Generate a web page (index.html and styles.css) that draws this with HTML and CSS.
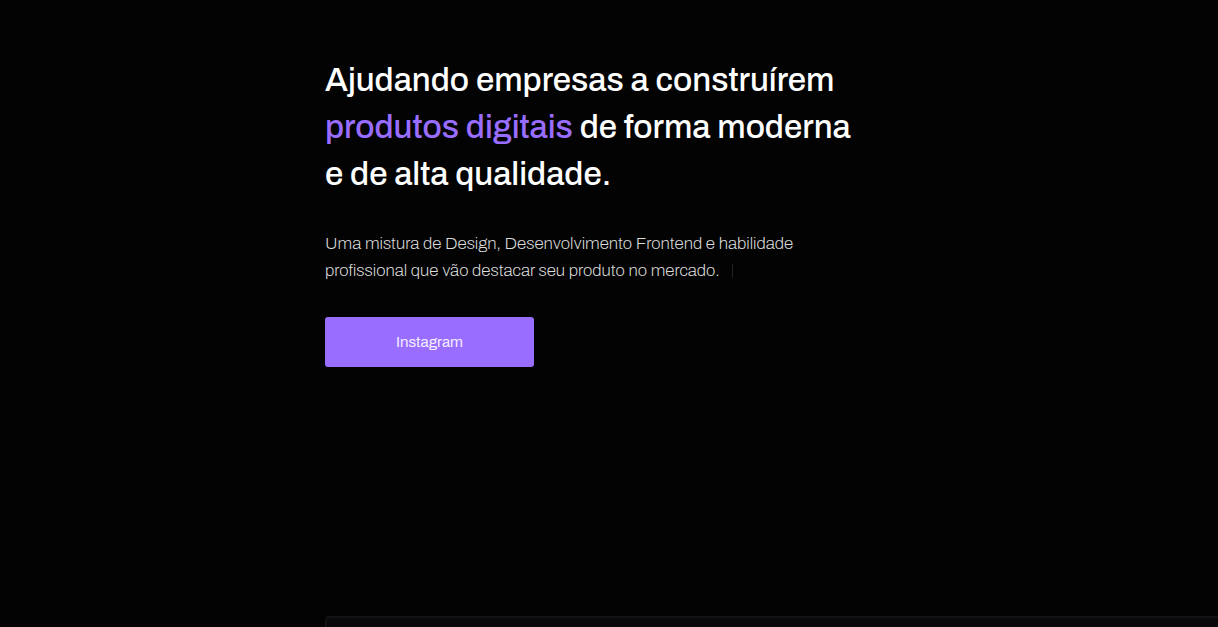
FILE: index.html
```html
<!DOCTYPE html>
<html lang="pt-BR">
<head>
<meta charset="utf-8">
<meta name="viewport" content="width=device-width, initial-scale=1">
<title>Produtos digitais</title>
<link rel="stylesheet" href="styles.css">
</head>
<body>
<main class="page">
  <section class="hero">
    <h1 class="title">Ajudando empresas a construírem<br><span class="accent">produtos digitais</span> de forma moderna<br>e de alta qualidade.</h1>
    <p class="lead">Uma mistura de Design, Desenvolvimento Frontend e habilidade profissional que vão destacar seu produto no mercado.<span class="caret"></span></p>
    <a class="button" href="#instagram">Instagram</a>
  </section>
  <section class="panel"></section>
</main>
</body>
</html>
```
FILE: styles.css
```css
* {
  box-sizing: border-box;
}

body {
  margin: 0;
  background: #030303;
  color: #fff;
  font-family: Archivo, "Liberation Sans", Arial, sans-serif;
}

.page {
  display: flex;
  flex-direction: column;
  min-height: 100vh;
  padding: 57px 0 0 325px;
}

.hero {
  display: flex;
  flex-direction: column;
  align-items: flex-start;
  flex: 1;
}

.title {
  max-width: 545px;
  margin: 0;
  font-size: 33px;
  font-weight: 500;
  line-height: 47px;
}

.accent {
  color: #996dff;
}

.lead {
  max-width: 490px;
  margin: 32px 0 33px;
  color: #dcdcdc;
  font-size: 17px;
  font-weight: 200;
  line-height: 27px;
}

.caret {
  display: inline-block;
  width: 1px;
  height: 14px;
  margin-left: 12px;
  background: #222225;
  vertical-align: -2px;
}

.button {
  width: 209px;
  border-radius: 3px;
  background: #996dff;
  color: #f4efff;
  font-size: 15px;
  line-height: 50px;
  text-align: center;
  text-decoration: none;
}

.panel {
  height: 11px;
  border: solid #121212;
  border-width: 2px 0 0 2px;
  border-radius: 4px 0 0 0;
  background: #08080a;
}

@media (max-width: 900px) {
  .page {
    padding-left: 24px;
  }
}
```
